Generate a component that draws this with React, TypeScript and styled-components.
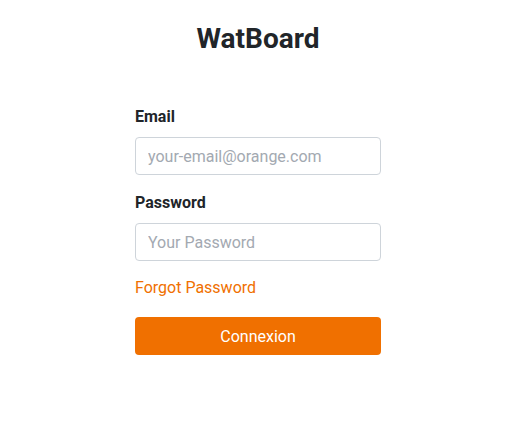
import React from "react";
import styled, { createGlobalStyle } from "styled-components";

const Global = createGlobalStyle`
  html, body { margin: 0; padding: 0; background: #ffffff; }
  body { font-family: Roboto, "Liberation Sans", Arial, sans-serif; color: #212529; }
  * { box-sizing: border-box; }
`;

const Page = styled.div`
  display: flex;
  justify-content: center;
  padding: 22px 15px 0 0;
`;

const Panel = styled.div`
  width: 246px;
  display: flex;
  flex-direction: column;
`;

const Title = styled.h2`
  margin: 0 0 48px;
  font-size: 28px;
  line-height: 34px;
  font-weight: 700;
  text-align: center;
  color: #212529;
`;

const Form = styled.form`
  display: flex;
  flex-direction: column;
  gap: 15px;
`;

const Field = styled.div`
  display: flex;
  flex-direction: column;
`;

const Label = styled.label`
  font-size: 16px;
  line-height: 25px;
  font-weight: 700;
  color: #212529;
  margin-bottom: 8px;
`;

const Input = styled.input`
  height: 38px;
  width: 100%;
  padding: 0 12px;
  border: 1px solid #ced4da;
  border-radius: 4px;
  font-family: inherit;
  font-size: 16px;
  color: #212529;
  background: #fff;
  outline: none;
  &::placeholder { color: #a3a9b1; }
`;

const Link = styled.a`
  font-size: 16px;
  line-height: 24px;
  color: #f07000;
  text-decoration: none;
  cursor: pointer;
  align-self: flex-start;
`;

const Button = styled.button`
  margin-top: 2px;
  height: 38px;
  width: 100%;
  border: none;
  border-radius: 4px;
  background: #f07000;
  color: #ffffff;
  font-family: inherit;
  font-size: 16px;
  cursor: pointer;
`;

export default function App() {
  return (
    <>
      <Global />
      <Page>
        <Panel>
          <Title>WatBoard</Title>
          <Form onSubmit={(e) => e.preventDefault()}>
            <Field>
              <Label htmlFor="email">Email</Label>
              <Input id="email" type="email" placeholder="your-email@orange.com" />
            </Field>
            <Field>
              <Label htmlFor="password">Password</Label>
              <Input id="password" type="password" placeholder="Your Password" />
            </Field>
            <Link>Forgot Password</Link>
            <Button type="submit">Connexion</Button>
          </Form>
        </Panel>
      </Page>
    </>
  );
}
